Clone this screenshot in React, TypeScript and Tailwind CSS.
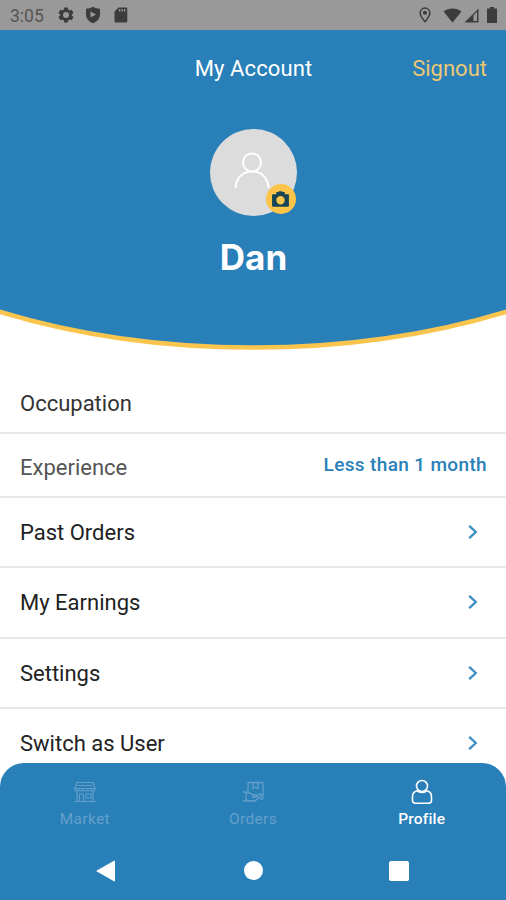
import React from 'react';

interface RowProps {
  label: string;
  value?: string;
  className: string;
  labelClass?: string;
  arrow?: boolean;
}

const Chevron: React.FC = () => (
  <svg viewBox="0 0 10 14" className="w-[10px] h-[14px] mr-[9px]" fill="none" stroke="#3c8fc4" strokeWidth="2.300">
    <path d="M1.200 .8 7.800 7 1.200 13.200" />
  </svg>
);

const Row: React.FC<RowProps> = ({ label, value, className, labelClass = '', arrow }) => (
  <div className={`flex items-center justify-between pl-5 pr-[19px] border-b-2 border-[#e8e8e8] ${className}`}>
    <span className={`text-[22px] leading-[26px] whitespace-nowrap ${labelClass}`}>{label}</span>
    {value && <span className="text-[19px] leading-6 font-medium tracking-[0.35px] text-[#2980b9] -mt-[6px]">{value}</span>}
    {arrow && <Chevron />}
  </div>
);

const StatusBar: React.FC = () => (
  <div className="h-[30px] shrink-0 bg-[#999999] text-[#3c3c3c] flex items-center justify-between pl-[10px] pr-[9px]">
    <div className="flex items-center h-full">
      <span className="w-[47px] text-[17.500px] leading-[30px] pt-[2px] text-[#555555]">3:05</span>
      {/* Settings */}
      <svg viewBox="0 0 24 24" className="w-[18px] h-[18px] mr-[10px]" fill="currentColor">
        <path fillRule="evenodd" d="m9.5 2-.6 3-1.7 1-2.8-1L2 9.2l2.2 2v1.6L2 14.8 4.400 19l2.800-1 1.700 1 .6 3h5l.6-3 1.700-1 2.800 1 2.400-4.200-2.200-2v-1.600l2.200-2L19.600 5l-2.800 1-1.700-1-.6-3ZM12 8a4 4 0 1 1 0 8 4 4 0 0 1 0-8Z" />
      </svg>
      {/* Play Protect */}
      <svg viewBox="0 0 16 18" className="w-[16px] h-[18px] mr-[13px]" fill="currentColor">
        <path fillRule="evenodd" d="M8 .8c2 1.300 4.200 1.900 7 2v5.400c0 4.300-2.700 7.200-7 9-4.300-1.800-7-4.700-7-9V2.800c2.800-.1 5-.7 7-2ZM5.500 5.500v6l5.500-3Z" />
      </svg>
      {/* SD card */}
      <svg viewBox="0 0 14 16" className="w-[14px] h-[16px]" fill="currentColor">
        <path fillRule="evenodd" d="M4.500.5H12c.8 0 1.300.5 1.300 1.300v12.400c0 .8-.5 1.300-1.300 1.300H1.800c-.8 0-1.300-.5-1.300-1.300V4.500ZM5 2v2.500h1.300V2Zm2.500 0v2.500h1.300V2ZM10 2v2.500h1.300V2Z" />
      </svg>
    </div>
    <div className="flex items-center h-full">
      <svg viewBox="0 0 12 16" className="w-[12px] h-[16px] mr-[12px]" fill="none" stroke="currentColor" strokeWidth="1.500">
        <path d="M6 1a4.800 4.800 0 0 0-4.800 4.800C1.200 9.300 6 14.700 6 14.700s4.800-5.400 4.800-8.900A4.800 4.800 0 0 0 6 1Z" />
        <circle cx="6" cy="5.800" r="1.300" fill="currentColor" />
      </svg>
      <svg viewBox="0 0 19 15" className="w-[19px] h-[15px] mr-[2px]" fill="currentColor">
        <path d="M.5 3.500C5.500-.5 13.500-.5 18.500 3.500L9.500 14.500Z" />
      </svg>
      <svg viewBox="0 0 15 15" className="w-[15px] h-[15px] mr-[8px]" fill="currentColor">
        <path fillRule="evenodd" d="M14.500.5v14H.5ZM9.500 7.200V13H13V3.700Z" />
      </svg>
      <svg viewBox="0 0 10 16" className="w-[10px] h-[16px]" fill="currentColor">
        <path d="M3 0h4v1.500h3V16H0V1.500h3Z" />
      </svg>
    </div>
  </div>
);

const Avatar: React.FC = () => (
  <div className="relative w-[87px] h-[87px] rounded-full bg-[#dcdcdc]">
    <svg viewBox="0 0 36 37" className="absolute left-[24px] top-[23px] w-[36px] h-[37px]" fill="none" stroke="#ffffff" strokeWidth="2">
      <circle cx="18" cy="10.500" r="9" />
      <path d="M1.500 36C2 27 7.500 19.500 18 19.500S34 27 34.500 36" />
    </svg>
    <div className="absolute left-[56px] top-[55px] w-[30px] h-[30px] rounded-full bg-[#fcc54a] flex items-center justify-center">
      <svg viewBox="0 0 18 16" className="w-[19px] h-[17px]" fill="#174556">
        <path fillRule="evenodd" d="M5 1h2l.5-.8h3l.5.8h2v2h3.200c.6 0 .8.2.8.800V14c0 .6-.2.8-.8.8H1.800C1.200 14.800 1 14.600 1 14V3.800c0-.6.2-.8.8-.8H5ZM9 4.800a4 4 0 1 0 0 8 4 4 0 0 0 0-8Z" />
      </svg>
    </div>
  </div>
);

const Header: React.FC = () => (
  <header className="relative h-[322px] shrink-0 text-white">
    {/* Curved backdrop */}
    <svg viewBox="0 0 506 322" className="absolute inset-0 w-[506px] h-[322px]">
      <path d="M0 0H506V281.500Q391 317.500 253 317.500Q115 317.500 0 281.500Z" fill="#2980b9" />
      <path d="M-5 280.300Q115 317.500 253 317.500Q391 317.500 511 280.300" fill="none" stroke="#fac54e" strokeWidth="4.500" />
    </svg>
    <div className="relative flex flex-col items-center">
      <div className="w-full h-[76px] grid grid-cols-3 items-center text-[22px]">
        <span />
        <span className="text-center whitespace-nowrap pl-px tracking-[0.1px]">My Account</span>
        <span className="text-right pr-[19px] text-[#ecc774]">Signout</span>
      </div>
      <div className="mt-[23px] w-[87px]">
        <Avatar />
      </div>
      <h1 className="mt-[18px] pl-px font-['Inter',sans-serif] text-[35px] leading-[46px] font-bold">Dan</h1>
    </div>
  </header>
);

const TabBar: React.FC = () => (
  <nav className="h-[78px] shrink-0 grid grid-cols-3 pt-[16px] text-[15.500px] leading-[20px] tracking-[0.35px] text-[#639fc9]">
    <div className="flex flex-col items-center pl-px">
      <svg viewBox="0 0 22 22" className="w-[22px] h-[22px] mt-[2px] ml-px" fill="none" stroke="currentColor" strokeWidth="1.200">
        <path d="M3 1.500h16l2 6H1ZM3 10v10M19 10v10M0 20.500h22M1 7.500v1c0 2 4 2 4 0 0 2 4 2 4 0 0 2 4 2 4 0 0 2 4 2 4 0 0 2 4 2 4 0v-1M5.500 20v-7h4v7M12 13h5v4h-5ZM4 4.500h14" />
      </svg>
      <span className="mt-[6px]">Market</span>
    </div>
    <div className="flex flex-col items-center">
      <svg viewBox="0 0 22 22" className="w-[22px] h-[22px] mt-[2px]" fill="none" stroke="currentColor" strokeWidth="1.300">
        <path d="M6 11V2.500q0-1 1-1h13q1 0 1 1V17q0 1-1 1h-2M11 1.500v6l2.500-1.500L16 7.500v-6M1 11h3v9H1M4 12h4l3 2h3c2 0 2 2 0 2h-4M14 15l4-2c1.500 0 2 1 1 2l-6 5H8l-4-1" />
      </svg>
      <span className="mt-[6px]">Orders</span>
    </div>
    <div className="flex flex-col items-center text-white font-medium tracking-[0.200px]">
      <svg viewBox="0 0 22 26" className="w-[22px] h-[26px]" fill="none" stroke="currentColor" strokeWidth="1.600">
        <circle cx="11" cy="7" r="5.500" />
        <path d="M6 11.700c-3 .8-4.500 3.200-4.500 6v3.500c0 1.800 1 3 3 3h13c2 0 3-1.200 3-3v-3.500c0-2.800-1.500-5.200-4.500-6-1 1-2.800 1.800-5 1.800s-4-.8-5-1.800Z" />
      </svg>
      <span className="mt-[4px]">Profile</span>
    </div>
  </nav>
);

const SystemNav: React.FC = () => (
  <div className="h-[59px] flex justify-between items-center pl-[96px] pr-[97px]">
    <svg viewBox="0 0 20 22" className="w-[20px] h-[22px]" fill="#ffffff">
      <path d="M18.500 1v20L.8 11Z" stroke="#ffffff" strokeLinejoin="round" />
    </svg>
    <div className="w-[19px] h-[19px] ml-[2px] rounded-full bg-white" />
    <div className="w-[20px] h-[20px] rounded-[2px] bg-white" />
  </div>
);

const App: React.FC = () => (
  <div className="w-[506px] h-[900px] overflow-hidden flex flex-col bg-white font-['Roboto',sans-serif]">
    <StatusBar />
    <Header />
    <main className="h-[411px] shrink-0 text-[#222222]">
      <Row label="Occupation" className="h-[82px] pt-[23px]" labelClass="text-[#333333]" />
      <Row label="Experience" value="Less than 1 month" className="h-[64px] pt-[5px]" labelClass="text-[#555555]" />
      <Row label="Past Orders" arrow className="h-[70px]" labelClass="pt-[2px]" />
      <Row label="My Earnings" arrow className="h-[71px] pb-px" labelClass="pt-[2px]" />
      <Row label="Settings" arrow className="h-[70px]" labelClass="pt-[2px]" />
      <Row label="Switch as User" arrow className="h-[71px] border-b-0 pb-[1px]" labelClass="pt-[2px]" />
    </main>
    <footer className="h-[137px] shrink-0 bg-[#2980b9] rounded-t-[24px]">
      <TabBar />
      <SystemNav />
    </footer>
  </div>
);

export default App;
